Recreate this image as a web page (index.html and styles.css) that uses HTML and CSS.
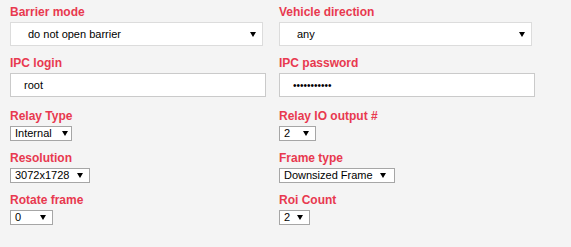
FILE: index.html
```html
<!DOCTYPE html>
<html lang="en">
<head>
  <meta charset="UTF-8" />
  <meta name="viewport" content="width=device-width, initial-scale=1.0" />
  <title>Camera settings</title>
  <link rel="stylesheet" href="styles.css">
</head>
<body>
  <div class="settings">
    <div class="grid">
      <div class="field">
        <label class="field-label">Barrier mode</label>
        <div class="select-wide"><span>do not open barrier</span><i class="caret"></i></div>
      </div>
      <div class="field">
        <label class="field-label">Vehicle direction</label>
        <div class="select-wide"><span>any</span><i class="caret"></i></div>
      </div>

      <div class="field field-text">
        <label class="field-label">IPC login</label>
        <input class="text-input" type="text" value="root" />
      </div>
      <div class="field field-text">
        <label class="field-label">IPC password</label>
        <input class="text-input password" type="password" value="12345678901" />
      </div>

      <div class="field">
        <label class="field-label">Relay Type</label>
        <div class="select-small sel-relay"><span>Internal</span><i class="caret"></i></div>
      </div>
      <div class="field">
        <label class="field-label">Relay IO output #</label>
        <div class="select-small sel-output"><span>2</span><i class="caret"></i></div>
      </div>

      <div class="field">
        <label class="field-label">Resolution</label>
        <div class="select-small sel-resolution"><span>3072x1728</span><i class="caret"></i></div>
      </div>
      <div class="field">
        <label class="field-label">Frame type</label>
        <div class="select-small sel-frame"><span>Downsized Frame</span><i class="caret"></i></div>
      </div>

      <div class="field">
        <label class="field-label">Rotate frame</label>
        <div class="select-small sel-rotate"><span>0</span><i class="caret"></i></div>
      </div>
      <div class="field">
        <label class="field-label">Roi Count</label>
        <div class="select-small sel-roi"><span>2</span><i class="caret"></i></div>
      </div>
    </div>

    <div class="actions">
      <button class="btn" aria-label="Save"></button>
    </div>
  </div>
</body>
</html>
```

FILE: styles.css
```css
html {
  overflow: hidden;
}
body {
  margin: 0;
  background: #f4f4f4;
  font-family: 'Liberation Sans', Arial, sans-serif;
}
.settings {
  width: 529px;
  padding: 5px 0 0 10px;
}
.grid {
  display: grid;
  grid-template-columns: 269px 260px;
}
.field {
  margin-bottom: 10px;
}
.field-text {
  margin-bottom: 12px;
}
.field-label {
  display: block;
  font-size: 12px;
  line-height: 14px;
  font-weight: bold;
  color: #e8394f;
  margin-bottom: 3px;
}
.select-wide {
  display: flex;
  align-items: center;
  width: 253px;
  height: 24px;
  box-sizing: border-box;
  border: 1px solid #dcdcdc;
  background: white;
  padding: 0 6px 0 17px;
  font-size: 11px;
  color: #000;
}
.text-input {
  display: block;
  width: 256px;
  height: 24px;
  box-sizing: border-box;
  border: 1px solid #cacaca;
  background: white;
  padding: 0 13px;
  margin: 0;
  font-family: 'Liberation Sans', Arial, sans-serif;
  font-size: 11px;
  color: #000;
  outline: none;
}
.password {
  font-size: 10px;
}
.select-small {
  display: flex;
  align-items: center;
  height: 15px;
  box-sizing: border-box;
  border: 1px solid #a6a6a6;
  background: white;
  padding: 0 6px 0 4px;
  font-size: 11px;
  line-height: 13px;
  color: #000;
}
.caret {
  margin-left: auto;
  width: 0;
  height: 0;
  border-left: 3px solid transparent;
  border-right: 3px solid transparent;
  border-top: 5px solid #000;
}
.sel-relay { width: 62px; padding-right: 3px; }
.sel-output { width: 37px; }
.sel-resolution { width: 80px; }
.sel-frame { width: 116px; padding-right: 8px; }
.sel-rotate { width: 43px; }
.sel-roi { width: 31px; }
.actions {
  display: flex;
  justify-content: flex-end;
  margin-top: 17px;
}
.btn {
  width: 118px;
  height: 30px;
  background: #ececec;
  border: 1px solid #c8c8c8;
}
```
